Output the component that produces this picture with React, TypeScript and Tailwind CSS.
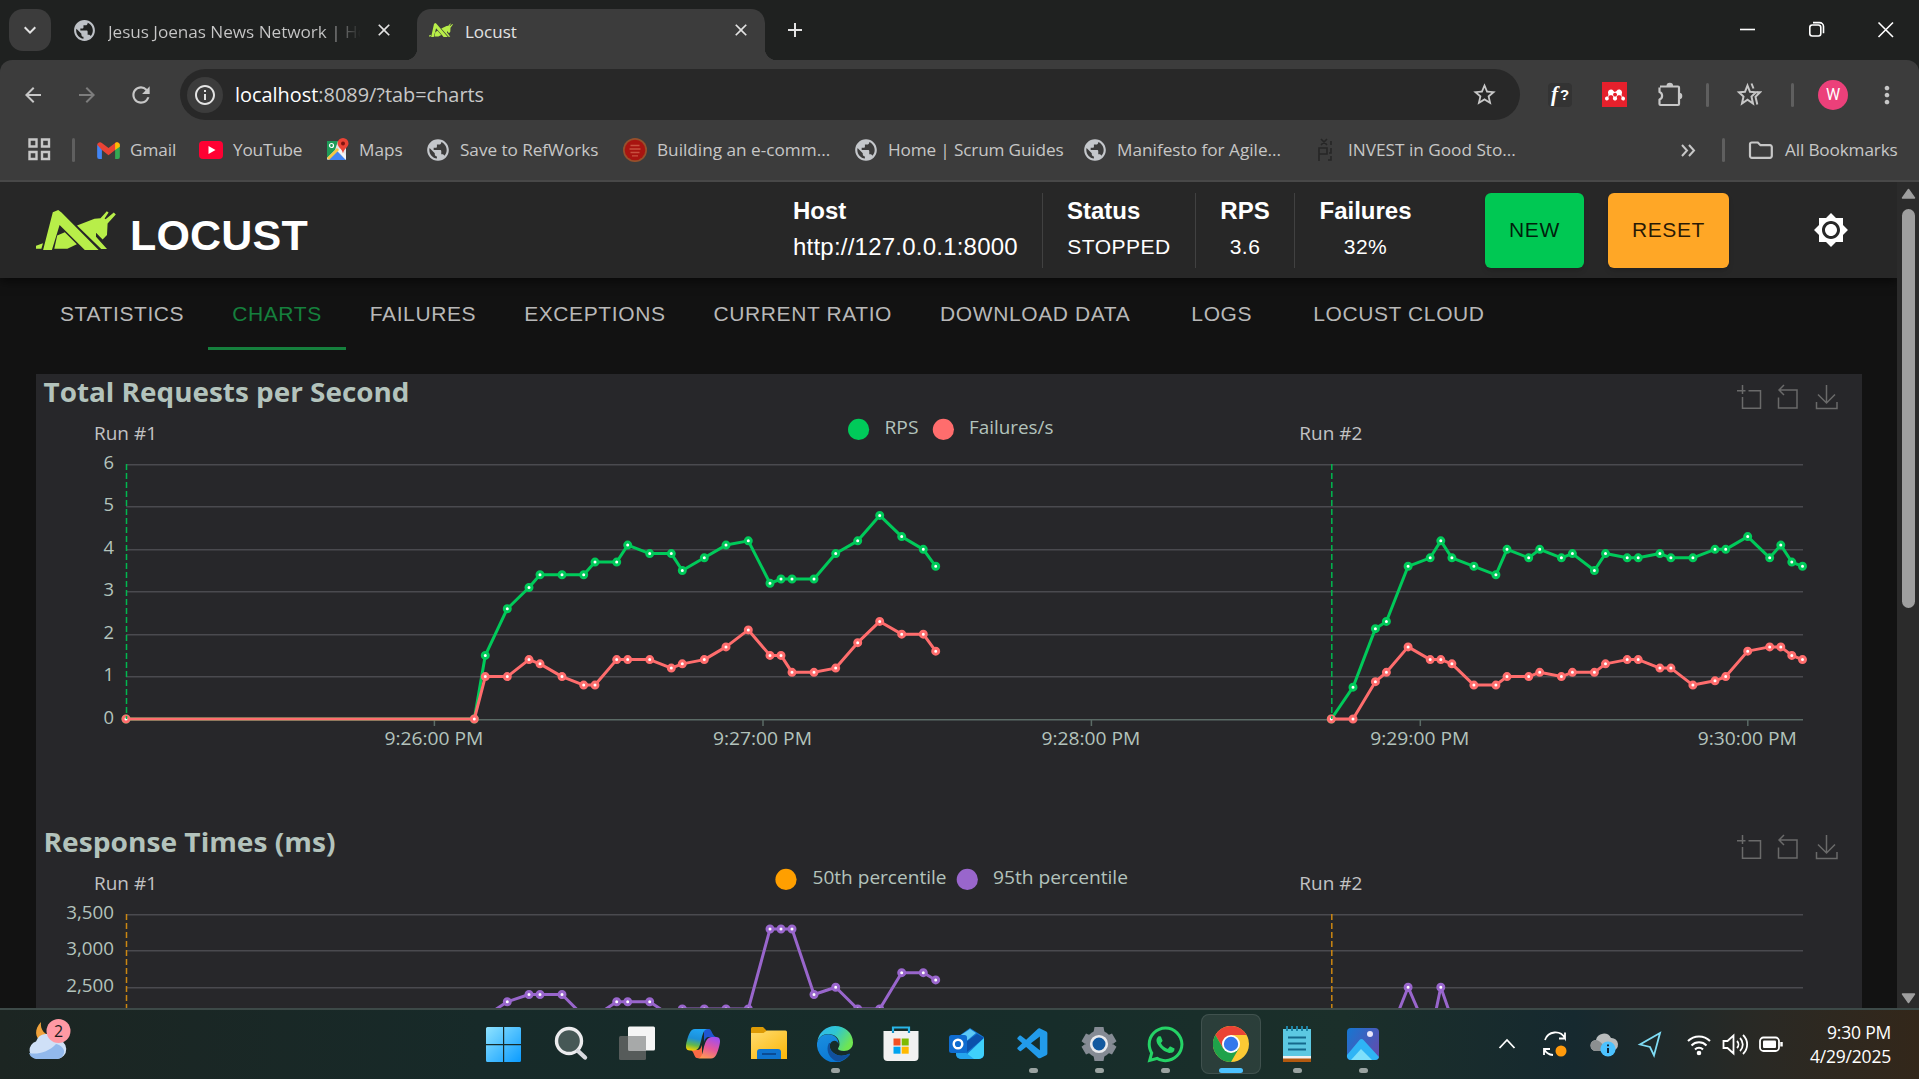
import React from "react";
import {
  MdPublic, MdArrowBack, MdArrowForward, MdRefresh, MdInfoOutline, MdStarBorder, MdClose, MdAdd,
  MdBrightness7, MdMoreVert, MdKeyboardArrowDown,
} from "react-icons/md";
import { FaWhatsapp } from "react-icons/fa";
import { SiMendeley } from "react-icons/si";
import { VscVscode } from "react-icons/vsc";

const UI = "font-['Open_Sans','Noto_Sans',sans-serif]";
const ARIAL = "font-['Liberation_Sans',sans-serif]";

/* ---------- Browser chrome ---------- */

function LocustMark({ className }: { className: string }) {
  return (
    <svg viewBox="0 0 80 40" preserveAspectRatio="none" className={className} fill="#b8ee49">
      <path d="M7.1 40 16.8 2.3 22.2 0 25.5 2.6 62.6 40H48.8L23.6 15 15.9 40Z" />
      <path d="M41 15.4 58.5 8.8 64.5 8.2 70.8 1.2 72.6 2.4 68.6 8.6 69.6 9.2 77.8 2.6 79.8 4.4 71.6 13.4 71 25 66.6 29.4 60 22.8 60 26.8 71 39H65.2Z" />
      <path d="M21.2 25.5 28.8 22.3 40.8 34.3 31.4 38.7H18.3Z" />
      <path d="M0 35.7 7 33.3 5.4 38.7H0Z" />
    </svg>
  );
}

function TabStrip() {
  return (
    <div className="flex h-[60px] items-start bg-[#1f2120] text-[#e3e3e3]">
      <div className="mt-[9px] ml-[9px] flex h-[42px] w-[42px] items-center justify-center rounded-[14px] bg-[#3c3c3c]">
        <MdKeyboardArrowDown className="size-6" />
      </div>
      <div className="mt-[9px] ml-[21px] flex h-[42px] w-[345px] items-center">
        <MdPublic className="size-[25px] text-[#bdc1c6]" />
        <div className="mt-[3px] ml-[11px] h-6 w-[253px] overflow-hidden bg-gradient-to-r from-[#c7c7c7] from-85% to-transparent bg-clip-text text-[17.200px] leading-6 tracking-[-0.050px] whitespace-nowrap text-transparent">
          Jesus Joenas News Network | Home
        </div>
        <MdClose className="ml-[13px] size-[20px]" />
      </div>
      <div className="relative mt-[9px] flex h-[51px] w-[348px] items-start rounded-t-[14px] bg-[#3c3c3c]">
        <div className="absolute bottom-0 -left-3 size-3 bg-[radial-gradient(circle_at_0_0,#1f2120_12px,#3c3c3c_12.5px)]" />
        <div className="absolute -right-3 bottom-0 size-3 bg-[radial-gradient(circle_at_100%_0,#1f2120_12px,#3c3c3c_12.5px)]" />
        <LocustMark className="mt-[14px] ml-3 h-[14px] w-6" />
        <div className="mt-[11px] ml-3 w-[250px] text-[17px] leading-6">Locust</div>
        <MdClose className="mt-[11px] ml-[16px] size-[20px]" />
      </div>
      <MdAdd className="mt-[18px] ml-[18px] size-[24px]" />
      <svg className="mt-[20px] ml-auto h-5 w-[180px]" viewBox="1739 20 180 20" fill="none" stroke="#fff" strokeWidth="1.6">
        <path d="M1740 29.5h15" />
        <rect x="1809.8" y="25" width="11" height="11" rx="2.5" />
        <path d="M1813 22.6h6.5a4 4 0 0 1 4 4v6.6M1878.5 22.5l14.5 14.5M1893 22.5l-14.500 14.500" />
      </svg>
    </div>
  );
}

function Toolbar() {
  return (
    <div className="bg-[#1f2120]">
      <div className="flex h-[69px] items-center rounded-t-xl bg-[#3c3c3c] text-[#c7c7c7]">
        <MdArrowBack className="ml-[21px] size-[24px]" />
        <MdArrowForward className="ml-[30px] size-[24px] text-[#7d7d7d]" />
        <MdRefresh className="ml-[29px] size-[26px]" />
        <div className="ml-[26px] flex h-[51px] w-[1340px] items-center rounded-full bg-[#282828]">
          <div className="ml-[7px] flex size-9 items-center justify-center rounded-full bg-[#3c3c3c]">
            <MdInfoOutline className="size-[24px] text-[#e3e3e3]" />
          </div>
          <div className="ml-[12px] text-[19.900px] leading-7 whitespace-nowrap">
            <span className="text-white">localhost</span>:8089/?tab=charts
          </div>
          <MdStarBorder className="mr-[22px] ml-auto size-[27px]" />
        </div>
        <div className="ml-[28px] flex size-6 items-center justify-center rounded bg-[#333] font-['Liberation_Serif',serif] text-[21px] leading-none font-bold text-white">
          <i>f</i><span className="ml-0.5 text-[15px] font-['Liberation_Sans',sans-serif]">?</span>
        </div>
        <div className="ml-[30px] flex size-[25px] items-center justify-center bg-[#e6202c] text-white">
          <SiMendeley className="size-[20px]" />
        </div>
        <svg className="ml-[29px] h-[28px] w-[28px]" viewBox="0 0 28 28" fill="none" stroke="currentColor" strokeWidth="2.200" strokeLinejoin="round">
          <path d="M4 5.500h18a1 1 0 0 1 1 1V23a1 1 0 0 1-1 1H4.500a1 1 0 0 1-1-1v-4.500a4 4 0 0 0 0-7.500V6.500" />
          <path d="M10.500 5a3.300 3.300 0 0 1 6.600 0zM23 11.700a3.300 3.300 0 0 1 0 6.600z" fill="currentColor" stroke="none" />
        </svg>
        <div className="ml-[22px] h-6 w-[3px] rounded bg-[#5f5f5f]" />
        <svg className="ml-[27px] h-[26px] w-[26px]" viewBox="0 0 26 26" fill="none" stroke="currentColor" strokeWidth="2">
          <path d="M11.500 3.500 14 9.800 20 10.300 15.500 14.500 17 21.500 11.500 17.700 6 21.500 7.500 14.500 3 10.300 9 9.800Z" />
          <path d="M15.500 1.500 17.500 6.500M20.500 10.300H24L19.500 14.800 21.300 22.500" />
        </svg>
        <div className="ml-[29px] h-6 w-[3px] rounded bg-[#5f5f5f]" />
        <div className="ml-[24px] flex size-[30px] items-center justify-center rounded-full bg-[#ec407a] font-['Roboto',sans-serif] text-[16px] text-white">W</div>
        <MdMoreVert className="ml-[25px] size-[28px]" />
      </div>
    </div>
  );
}

function Bookmark({ icon, label, className }: { icon: React.ReactNode; label: string; className: string }) {
  return (
    <div className={"flex h-6 shrink-0 items-center gap-[10px] whitespace-nowrap " + className}>
      <div className="flex w-6 shrink-0 items-center justify-center">{icon}</div>
      <span>{label}</span>
    </div>
  );
}

function BookmarksBar() {
  const globe = <MdPublic className="size-[26px] shrink-0 text-[#c4c7cb]" />;
  return (
    <div className="flex h-[53px] border-b-2 border-[#484848] bg-[#3c3c3c] pt-[9px] text-[17.200px] leading-6 text-[#c7c7c7]">
      <svg className="ml-[28px] size-[23px]" viewBox="0 0 23 23" fill="none" stroke="currentColor" strokeWidth="2.400">
        <path d="M1.500 1.500h7v7h-7zM14 1.500h7v7h-7zM1.500 14h7v7h-7zM14 14h7v7h-7z" />
      </svg>
      <div className="ml-[21px] h-6 w-[3px] rounded bg-[#5f5f5f]" />
      <Bookmark className="ml-[21px] w-[103px] tracking-[-0.100px]" label="Gmail" icon={
        <svg viewBox="0 0 24 18" className="h-[17px] w-[23px]">
          <path fill="#4285f4" d="M0 3v13a2 2 0 0 0 2 2h3V6z" /><path fill="#34a853" d="M24 3v13a2 2 0 0 1-2 2h-3V6z" />
          <path fill="#ea4335" d="M0 3a3 3 0 0 1 5-2l7 5.300L19 1a3 3 0 0 1 5 2L19 8.500l-7 5.500-7-5.500z" /><path fill="#fbbc04" d="M19 1a3 3 0 0 1 5 2v2l-5 3.500z" />
        </svg>} />
      <Bookmark className="w-[126px] tracking-[-0.200px]" label="YouTube" icon={
        <svg viewBox="0 0 24 18" className="h-[18px] w-6"><rect width="24" height="18" rx="4" fill="#ff0033" /><path d="M9.500 5v8l7-4z" fill="#fff" /></svg>} />
      <Bookmark className="w-[101px]" label="Maps" icon={
        <svg viewBox="0 0 24 24" className="size-6">
          <rect x="2" y="3" width="19" height="19" rx="1.500" fill="#dfe3e6" /><path d="M2 3h11l-3 9-8 8z" fill="#1e9b58" />
          <path d="m3 22 9-9 9 9z" fill="#4285f4" /><path d="M13 13l3-3 5 8v4z" fill="#f5f5f5" /><path d="M2 20 12 10l2 2L4 22z" fill="#f6c644" />
          <circle cx="6.500" cy="7.500" r="2" fill="none" stroke="#fff" strokeWidth="1.200" />
          <path d="M18 0a5.500 5.500 0 0 1 5.500 5.500c0 3.500-4.500 5-5.500 10-1-5-5.500-6.500-5.500-10A5.500 5.500 0 0 1 18 0" fill="#ea4335" /><circle cx="18" cy="5.500" r="2" fill="#811411" />
        </svg>} />
      <Bookmark className="w-[197px] tracking-[-0.050px]" label="Save to RefWorks" icon={globe} />
      <Bookmark className="w-[231px]" label="Building an e-comm..." icon={
        <svg viewBox="0 0 24 24" className="size-6 shrink-0"><circle cx="12" cy="12" r="12" fill="#96502c" /><circle cx="12" cy="12" r="10.300" fill="#a81410" /><path d="M7.500 7.500h9M6.500 11h11M7.500 14.500h9M9 17.800h6" stroke="#c8503f" strokeWidth="1.300" /></svg>} />
      <Bookmark className="w-[229px] tracking-[-0.150px]" label="Home | Scrum Guides" icon={globe} />
      <Bookmark className="w-[231px]" label="Manifesto for Agile..." icon={globe} />
      <Bookmark className="w-[210px]" label="INVEST in Good Sto..." icon={
        <svg viewBox="0 0 24 24" className="size-6" fill="none" stroke="#262626" strokeWidth="1.600"><path d="M5 23V10h8v6H5M7 1l6 6M13 1 7 7M17 3v4M17 10v5h-2M17 18v4h-3" /></svg>} />
      <svg className="mt-[5px] ml-[156px] h-[15px] w-4" viewBox="0 0 16 15" fill="none" stroke="currentColor" strokeWidth="2"><path d="m2 2 5 5.500-5 5.500M9 2l5 5.500L9 13" /></svg>
      <div className="ml-[26px] h-6 w-[3px] rounded bg-[#5f5f5f]" />
      <svg className="mt-[3px] ml-[23px] h-[19px] w-[26px]" viewBox="0 0 26 19" fill="none" stroke="currentColor" strokeWidth="2.200"><path d="M2 3.500V15a1.800 1.800 0 0 0 1.800 1.800H22a1.800 1.800 0 0 0 1.800-1.800V6A1.800 1.800 0 0 0 22 4.200H12.500L9.800 1.500H3.800A1.800 1.800 0 0 0 2 3.500Z" /></svg>
      <span className="ml-[11px] tracking-[-0.150px] whitespace-nowrap">All Bookmarks</span>
    </div>
  );
}

/* ---------- Locust page ---------- */

function Stat({ title, value, className = "" }: { title: string; value: string; className?: string }) {
  return (
    <div className={"flex h-[75px] flex-col items-center border-l border-[#414141] px-6 " + className}>
      <div className="text-[24px] leading-[36px] font-bold">{title}</div>
      <div className="text-[21px] leading-[35px] tracking-[0.500px]">{value}</div>
    </div>
  );
}

function AppBar() {
  return (
    <div className={"relative z-10 flex h-24 items-start bg-[#272727] pt-[11px] text-white shadow-[0_3px_10px_rgba(0,0,0,0.6)] " + ARIAL}>
      <LocustMark className="mt-[17px] ml-9 h-10 w-20" />
      <div className="mt-[17px] ml-[14px] w-[659px] text-[43px] leading-[50px] font-bold tracking-[0.200px]">LOCUST</div>
      <div className="ml-[4px] flex h-[70px] w-[249px] flex-col">
        <div className="text-[24px] leading-[36px] font-bold">Host</div>
        <div className="text-[24px] leading-[36px] tracking-[0.225px]">http://127.0.0.1:8000</div>
      </div>
      <Stat title="Status" value="STOPPED" className="w-[153px] [&>div:first-child]:self-start" />
      <Stat title="RPS" value="3.6" className="w-[99px]" />
      <Stat title="Failures" value="32%" className="w-[142px]" />
      <div className="ml-[49px] flex h-[75px] w-[99px] items-center justify-center rounded-md bg-[#00c853] pb-[2px] text-[21px] tracking-[0.600px] text-black/85 shadow-md">NEW</div>
      <div className="ml-6 flex h-[75px] w-[121px] items-center justify-center rounded-md bg-[#ffa726] pb-[2px] text-[21px] tracking-[0.600px] text-black/85 shadow-md">RESET</div>
      <MdBrightness7 className="mt-[19px] ml-[84px] size-9" />
    </div>
  );
}

const TABS = ["STATISTICS", "CHARTS", "FAILURES", "EXCEPTIONS", "CURRENT RATIO", "DOWNLOAD DATA", "LOGS", "LOCUST CLOUD"];

function NavTabs() {
  return (
    <div className={"flex h-[72px] pl-9 text-[21px] leading-[71px] tracking-[0.600px] text-[#b8b8b8] " + ARIAL}>
      {TABS.map((t) => (
        <div
          key={t}
          className={
            t === "CHARTS"
              ? "min-w-[135px] border-b-[3px] border-[#15803d] px-6 text-center whitespace-nowrap text-[#15803d]"
              : "min-w-[135px] px-6 text-center whitespace-nowrap"
          }
        >
          {t}
        </div>
      ))}
    </div>
  );
}

type Pt = [number, number];

const X1 = [126, 474.3, 485.3, 507.3, 529, 540, 562, 583.7, 595, 616.7, 627.7, 649.7, 671.3, 682.3, 704.3, 726, 748.3, 770, 781, 792, 814, 835.7, 857.7, 879.7, 901.7, 923.3, 935.7];
const X2 = [1331.3, 1353, 1375.4, 1386.4, 1408.1, 1430.2, 1440.8, 1451.9, 1473.9, 1495.9, 1507, 1528.7, 1539.7, 1561.4, 1572.4, 1594.4, 1605.5, 1627.2, 1638.2, 1659.9, 1670.9, 1692.9, 1715, 1725.7, 1747.7, 1769.7, 1780.8, 1791.8, 1802.5];
const RPS1 = [0, 0, 1.5, 2.6, 3.1, 3.4, 3.4, 3.4, 3.7, 3.7, 4.1, 3.9, 3.9, 3.5, 3.8, 4.1, 4.2, 3.2, 3.3, 3.3, 3.3, 3.9, 4.2, 4.8, 4.3, 4.0, 3.6];
const RPS2 = [0, 0.75, 2.13, 2.3, 3.6, 3.8, 4.2, 3.8, 3.6, 3.4, 4, 3.8, 4, 3.8, 3.9, 3.5, 3.9, 3.8, 3.8, 3.9, 3.8, 3.8, 4, 4, 4.3, 3.8, 4.1, 3.7, 3.6];
const FAIL1 = [0, 0, 1, 1, 1.4, 1.3, 1, 0.8, 0.8, 1.4, 1.4, 1.4, 1.2, 1.3, 1.4, 1.7, 2.1, 1.5, 1.5, 1.1, 1.1, 1.2, 1.8, 2.3, 2, 2, 1.6];
const FAIL2 = [0, 0, 0.88, 1.1, 1.7, 1.4, 1.4, 1.3, 0.8, 0.8, 1, 1, 1.1, 1, 1.1, 1.1, 1.3, 1.4, 1.4, 1.2, 1.2, 0.8, 0.9, 1, 1.6, 1.7, 1.7, 1.5, 1.4];
const P95A = [0, 0, 2100, 2300, 2400, 2400, 2400, 2100, 2100, 2300, 2300, 2300, 2100, 2200, 2200, 2200, 2200, 3300, 3300, 3300, 2400, 2500, 2200, 2200, 2700, 2700, 2600];
const P95B = [0, 600, 1200, 1750, 2500, 1800, 2500, 2060, 1900, 1800, 1700];

const TOP = 464.5;
const BOTTOM = 719;

function points(xs: number[], values: number[], max: number): Pt[] {
  return values.map((v, i) => [xs[i], BOTTOM - (v / max) * (BOTTOM - TOP)]);
}

function Series({ pts, color }: { pts: Pt[]; color: string }) {
  return (
    <g>
      <polyline points={pts.map((p) => p.join(",")).join(" ")} fill="none" stroke={color} strokeWidth="3" strokeLinejoin="bevel" />
      {pts.map(([x, y]) => (
        <circle key={x} cx={x} cy={y} r="3" fill="#fff" stroke={color} strokeWidth="3" />
      ))}
    </g>
  );
}

interface ChartProps {
  title: string;
  titleWidth: number;
  max: number;
  labels: string[];
  times: string[];
  mark: string;
  legend: { x: number; tx: number; w: number; color: string; name: string }[];
  series: { color: string; pts: Pt[] }[];
}

function Chart({ title, titleWidth, max, labels, times, mark, legend, series }: ChartProps) {
  const step = (BOTTOM - TOP) / (labels.length - 1);
  return (
    <svg className={"block h-[450px] w-[1826px] shrink-0 bg-[#27272a] " + UI} viewBox="36 374 1826 450" fontSize="18.700">
      <text x="43.500" y="401.500" fontSize="27.500" fontWeight="bold" fill="#b3c3bc" textLength={titleWidth} lengthAdjust="spacingAndGlyphs">{title}</text>
      <g fill="none" stroke="#6a6a6a" strokeWidth="1.500">
        <path d="M1737 390.700h8.500M1742.500 385v9M1748.500 390.700h12v17.500h-18V397" />
        <path d="M1779.500 390h17.500v18h-18.500V397.500M1784 385l-5 5 5 5" />
        <path d="M1826.500 385v17M1818 394.500l8.500 8.500 8.500-8.500M1816.500 402v6.500h20.500V402" />
      </g>
      {legend.map((l) => (
        <g key={l.name}>
          <circle cx={l.x} cy="429.400" r="10.600" fill={l.color} />
          <text x={l.tx} y="434" fill="#b3c3bc" textLength={l.w} lengthAdjust="spacingAndGlyphs">{l.name}</text>
        </g>
      ))}
      {labels.map((l, i) => {
        const y = BOTTOM - i * step;
        return (
          <g key={i}>
            <path d={`M126 ${Math.floor(y) + 0.75}H1803`} stroke={i === 0 ? "#5b6b66" : "#4a4a4f"} strokeWidth="1.500" />
            {l && <text x="114" y={y + 4.5} textAnchor="end" fill="#b3c3bc" fontSize={max > 100 ? 18.8 : 18.4}>{l}</text>}
          </g>
        );
      })}
      {times.map((t, i) => {
        const x = [434.4, 763, 1091.4, 1420.3, 1747.8][i];
        return (
          <g key={t}>
            <path d={`M${x} 720v6`} stroke="#5b6b66" strokeWidth="1.500" />
            <text x={x - 50} y="744.500" fill="#b3c3bc" textLength="99" lengthAdjust="spacingAndGlyphs">{t}</text>
          </g>
        );
      })}
      {series.map((s, i) => (
        <Series key={i} pts={s.pts} color={s.color} />
      ))}
      {[126.5, 1331.8].map((x, i) => (
        <g key={x}>
          <path d={`M${x} 464V719`} stroke={mark} strokeWidth="1.500" strokeDasharray="6 3" />
          <text x={x - 32.5} y="440" fill="#c2c2c4" textLength="63" lengthAdjust="spacingAndGlyphs">{`Run #${i + 1}`}</text>
        </g>
      ))}
    </svg>
  );
}

function Charts() {
  return (
    <div className="ml-9 flex h-[634px] w-[1826px] flex-col overflow-hidden">
      <Chart
        title="Total Requests per Second" titleWidth={366} max={6}
        labels={["0", "1", "2", "3", "4", "5", "6"]} mark="#00b84f"
        times={["9:26:00 PM", "9:27:00 PM", "9:28:00 PM", "9:29:00 PM", "9:30:00 PM"]}
        legend={[
          { x: 858.6, tx: 884.5, w: 34, color: "#00ca5a", name: "RPS" },
          { x: 943.4, tx: 969, w: 84.5, color: "#ff6d6d", name: "Failures/s" },
        ]}
        series={[
          { color: "#00ca5a", pts: points(X1, RPS1, 6) },
          { color: "#00ca5a", pts: points(X2, RPS2, 6) },
          { color: "#ff6d6d", pts: points(X1, FAIL1, 6) },
          { color: "#ff6d6d", pts: points(X2, FAIL2, 6) },
        ]}
      />
      <Chart
        title="Response Times (ms)" titleWidth={292} max={3500}
        labels={["", "", "", "", "", "2,500", "3,000", "3,500"]} mark="#cc8712" times={[]}
        legend={[
          { x: 786, tx: 812.5, w: 134, color: "#ff9f00", name: "50th percentile" },
          { x: 967.3, tx: 993, w: 135, color: "#9966cc", name: "95th percentile" },
        ]}
        series={[
          { color: "#9966cc", pts: points(X1, P95A, 3500) },
          { color: "#9966cc", pts: points(X2, P95B, 3500) },
        ]}
      />
    </div>
  );
}

function Scrollbar() {
  return (
    <div className="flex w-[22px] flex-col items-center bg-[#2b2b2b] pt-[6px] pb-[4px]">
      <svg viewBox="0 0 15 11" className="h-[11px] w-[15px]"><path d="M7.500 1.500 13.500 10h-12z" fill="#9f9f9f" stroke="#9f9f9f" strokeWidth="1.500" strokeLinejoin="round" /></svg>
      <div className="mt-[10px] h-[399px] w-[13px] rounded-full bg-[#9f9f9f]" />
      <svg viewBox="0 0 15 11" className="mt-auto h-[11px] w-[15px]"><path d="M7.500 9.500 13.500 1h-12z" fill="#9f9f9f" stroke="#9f9f9f" strokeWidth="1.500" strokeLinejoin="round" /></svg>
    </div>
  );
}

/* ---------- Taskbar ---------- */

function TaskIcon({ children, state = "" }: { children: React.ReactNode; state?: string }) {
  return (
    <div className="flex w-[66px] justify-center pt-[4px]">
      <div className={"flex h-[60px] w-[60px] flex-col items-center rounded-lg pt-[12px] " + (state === "active" ? "bg-white/8 ring-1 ring-white/10 ring-inset" : "")}>
        <div className="flex h-9 w-9 items-center justify-center">{children}</div>
        {state === "open" && <div className="mt-[6px] h-[5px] w-[9px] rounded-full bg-[#9aa3a1]" />}
        {state === "active" && <div className="mt-[6px] h-[5px] w-6 rounded-full bg-[#4cc2ff]" />}
      </div>
    </div>
  );
}

function Taskbar() {
  return (
    <div className={"flex h-[71px] border-t-2 border-[#3d4a48] bg-[linear-gradient(90deg,#1c2522_0%,#172a29_25%,#172d2a_55%,#1b2f2a_70%,#16292f_82%,#2a2924_92%,#33271a_100%)] " + UI}>
      <svg viewBox="0 0 48 48" className="mt-[6px] ml-6 size-12">
        <path d="M17 6c-1 7 3 14 14 14-3 6-10 7-14 5-6-3-7-12 0-19" fill="#f0a23c" />
        <path d="M13 43a9 9 0 0 1-1-17.500 11 11 0 0 1 20-2 9.500 9.500 0 0 1 1 19.500z" fill="#cfe0f7" /><path d="M13 43a9 9 0 0 1-8-6c8 2 20-1 27-9 5 1 9 5 8 9a8 8 0 0 1-7 6z" fill="#92b9ec" />
        <circle cx="34.500" cy="15" r="12" fill="#ff99a4" /><text x="34.500" y="20.500" textAnchor="middle" fontSize="16" fill="#1b1b1b">2</text>
      </svg>
      <div className="ml-[398px] flex">
        <TaskIcon><svg viewBox="0 0 35 35" className="size-[35px]"><defs><linearGradient id="win" x2="1" y2="1"><stop stopColor="#8fe3ff" /><stop offset="1" stopColor="#0a9bff" /></linearGradient></defs><path d="M1.500 0H17v17H0V1.500A1.500 1.500 0 0 1 1.500 0M18.200 0h15.300A1.500 1.500 0 0 1 35 1.500V17H18.200zM0 18.200h17V35H1.500A1.500 1.500 0 0 1 0 33.500zM18.200 18.200H35v15.300a1.500 1.500 0 0 1-1.500 1.500H18.200z" fill="url(#win)" /></svg></TaskIcon>
        <div className="w-[2px]" />
        <TaskIcon><svg viewBox="0 0 36 36" className="size-9"><circle cx="16" cy="15" r="12.500" fill="#465856" stroke="#ececee" strokeWidth="3.400" /><path d="m25 25 7 6.500" stroke="#d8dadf" strokeWidth="4.400" strokeLinecap="round" /></svg></TaskIcon>
        <TaskIcon><svg viewBox="0 0 36 36" className="size-9"><rect x="9" y="0.500" width="27" height="24" rx="1.500" fill="#f5f5f5" /><rect x="0" y="10" width="27" height="24" rx="1.500" fill="#565b5a" /><path d="M9 10h18v15H10.500A1.500 1.500 0 0 1 9 23.500z" fill="#a7a9a9" /></svg></TaskIcon>
        <TaskIcon><svg viewBox="0 0 36 36" className="size-9">
          <defs>
            <linearGradient id="cpa" x1="0.500" x2="0.300" y2="1"><stop stopColor="#1fa4f4" /><stop offset="0.450" stopColor="#1c90d8" /><stop offset="0.750" stopColor="#62b84c" /><stop offset="1" stopColor="#f5d000" /></linearGradient>
            <linearGradient id="cpb" x1="0.700" x2="0.300" y2="1"><stop stopColor="#a04ef0" /><stop offset="0.500" stopColor="#e5579c" /><stop offset="1" stopColor="#ff9a52" /></linearGradient>
          </defs>
          <path d="M19 3h5c3 0 3 8 8 8h-8c-3 0-4 2-5 5z" fill="#1f55d0" /><path d="M17 32h-5c-3 0-3-8-7-8h7c3 0 4-2 5-5z" fill="#fb6a45" />
          <path d="M10 3h13c-4 0-5 4-6.500 10S14 24.500 9 24.500H5c-5 0-4.500-5-3-10S5 3 10 3" fill="url(#cpa)" />
          <path d="M26 32.500H12c4 0 5-3 6.500-9.500S22 11 27 11h4c5 0 4.500 5 3 10s-3 11.500-8 11.500" fill="url(#cpb)" />
        </svg></TaskIcon>
        <TaskIcon><svg viewBox="0 0 36 36" className="size-9"><defs><linearGradient id="fold" x2="0.800" y2="1"><stop stopColor="#ffdc70" /><stop offset="1" stopColor="#fbb90f" /></linearGradient></defs><path d="M0 2.500A1.500 1.500 0 0 1 1.500 1H12l4 4v4H0z" fill="#dd9a05" /><path d="M0 7h12.500L16 4.500h18.500A1.500 1.500 0 0 1 36 6v27H0z" fill="url(#fold)" /><path d="M6 33v-7a3 3 0 0 1 3-3h18a3 3 0 0 1 3 3v7z" fill="#0f74cf" /><path d="M11 28h14" stroke="#0a4b94" strokeWidth="2" /></svg></TaskIcon>
        <TaskIcon state="open"><svg viewBox="0 0 36 36" className="size-9">
          <defs>
            <linearGradient id="eg" x2="1" y2="0.500"><stop stopColor="#33b8f1" /><stop offset="0.500" stopColor="#2fc6d2" /><stop offset="1" stopColor="#6fe552" /></linearGradient>
            <linearGradient id="eb" x2="0.400" y2="1"><stop stopColor="#1b8fe0" /><stop offset="1" stopColor="#0a78d4" /></linearGradient>
          </defs>
          <path d="M0 17C2 10 8 7.500 13 8.500c6 1 8.500 5 8.500 9.500-1-3-4-4-6.500-2.500-3 2-3 6.500-.5 9.500 4 5 11 6 17 3 1-.500 1.700 0 1 1A18 18 0 0 1 0 17" fill="url(#eb)" />
          <path d="M12 17c-2.500 4-2 11 3 15.500 2 2 5 3.200 7 3 4-1 8-3.500 10.500-6.500.700-1 0-1.500-1-1-6 3-13 2-17-3-2-2.600-2.200-5.500-1-8" fill="#11509c" />
          <path d="M.3 15.500A18 18 0 0 1 18 0c10 0 18 7 18 16.500 0 5.500-4 8.500-9 8.500-4 0-6-1-6-2.200s1.500-2 1.500-4.800c0-6-5-10-11.500-10C6 8 2 11 .3 15.500" fill="url(#eg)" />
        </svg></TaskIcon>
        <TaskIcon><svg viewBox="0 0 36 36" className="size-9"><path d="M10 8V1.500h16V8" fill="none" stroke="#29b5e8" strokeWidth="2.200" /><path d="M.5 5h35v26a4 4 0 0 1-4 4h-27a4 4 0 0 1-4-4z" fill="#f1f1f1" /><path d="M10.500 12.500h7v7h-7z" fill="#f25022" /><path d="M18.700 12.500h7v7h-7z" fill="#7fba00" /><path d="M10.500 20.700h7v7h-7z" fill="#00a4ef" /><path d="M18.700 20.700h7v7h-7z" fill="#ffb900" /><path d="M10 5v2M26 5v2" stroke="#1793c8" strokeWidth="2.200" /></svg></TaskIcon>
        <TaskIcon><svg viewBox="0 0 36 36" className="size-9"><path d="M7 12 21 2l14 9v17a5 5 0 0 1-5 5H12a5 5 0 0 1-5-5z" fill="#1174cf" /><path d="M12 9 21 3l6 4-13 11z" fill="#5cc9f5" /><path d="M14 18 28 8l7 4-17 14z" fill="#0b51ab" /><path d="m35 12-22 21h17a5 5 0 0 0 5-5z" fill="#3fd0fa" /><path d="M7 19 25 33H12a5 5 0 0 1-5-5z" fill="#24a5ee" /><rect x="0" y="9" width="18" height="18" rx="2.500" fill="#0f6cd0" /><circle cx="9" cy="18" r="4.300" fill="none" stroke="#fff" strokeWidth="2.400" /></svg></TaskIcon>
        <TaskIcon state="open"><VscVscode className="size-[37px] shrink-0 text-[#229bea]" /></TaskIcon>
        <TaskIcon state="open"><svg viewBox="0 0 36 36" className="size-9"><g fill="#858b94"><circle cx="18" cy="18" r="13.500" /><path d="M13.500 1h9l1.500 8h-12zM13.500 35h9l1.500-8h-12zM31 7.500l4.500 7.800-6.500 5-5.500-9.500zM5 28.500.5 20.700l6.500-5 5.500 9.500zM5 7.500.5 15.300l6.500 5 5.500-9.500zM31 28.500l4.500-7.800-6.500-5-5.500 9.500z" /></g><circle cx="18" cy="18" r="7.800" fill="#12599f" stroke="#e8eaed" strokeWidth="2.600" /></svg></TaskIcon>
        <TaskIcon state="open"><FaWhatsapp className="size-[41px] shrink-0 text-[#25d366]" /></TaskIcon>
        <TaskIcon state="active"><svg viewBox="0 0 36 36" className="size-9"><circle cx="18" cy="18" r="18" fill="#fcc934" /><path d="M2.400 9A18 18 0 0 1 33.600 9H18l-7.800 13.500z" fill="#ea4335" /><path d="M2.400 9A18 18 0 0 0 18 36l7.800-13.500-15.600 0z" fill="#1fa24a" /><circle cx="18" cy="18" r="9" fill="#fff" /><circle cx="18" cy="18" r="7.200" fill="#3478ec" /></svg></TaskIcon>
        <TaskIcon state="open"><svg viewBox="0 0 36 36" className="size-9"><path d="M4 3h28v28H4z" fill="#5cc8e2" /><path d="M4 30h28v3H4z" fill="#f2f2f2" /><path d="M4 32.500h28V36H4z" fill="#b3590f" /><path d="M9 11.500h18M9 17.500h18M9 23.500h18" stroke="#14688c" strokeWidth="2" /><path d="M8 0v5M13 0v5M18 0v5M23 0v5M28 0v5" stroke="#1e84a6" strokeWidth="2" /></svg></TaskIcon>
        <TaskIcon state="open"><svg viewBox="0 0 36 36" className="size-9"><defs><linearGradient id="ph" x2="1" y2="0.600"><stop stopColor="#1577d2" /><stop offset="1" stopColor="#5b4fb0" /></linearGradient></defs><rect x="2" y="2" width="32" height="32" rx="4" fill="url(#ph)" /><path d="M2 29 14.500 14a2.500 2.500 0 0 1 4 0L34 31a4 4 0 0 1-4 3H6a4 4 0 0 1-4-5" fill="#2fb4f5" /><path d="m6 34 10-11 11 11z" fill="#7fe0fb" /><circle cx="25" cy="8" r="3" fill="#e8e6fa" /></svg></TaskIcon>
      </div>
      <svg viewBox="1490 1010 320 69" className="ml-[94px] h-[69px] w-[320px] shrink-0" fill="none" stroke="#fff" strokeWidth="1.800">
        <path d="m1499.500 1048 7.500-8 7.500 8" />
        <path d="M1545 1040a11 11 0 0 1 20-2v-5.500M1565 1038.500h-6M1544 1055v-6h6M1544 1049a11 11 0 0 0 9 6" />
        <circle cx="1561" cy="1051" r="5.500" fill="#ff9a0c" stroke="none" />
        <g stroke="none"><path d="M1596 1051a5.500 5.500 0 0 1 0-11 8 8 0 0 1 15-2 6.500 6.500 0 0 1 1 13z" fill="#b9bcbd" /><path d="M1596 1051a5.500 5.500 0 0 1 0-11c4 0 7 5 12 11z" fill="#8b8f90" /><circle cx="1608" cy="1049" r="7.600" fill="#4cc2ff" /></g>
        <path d="M1608 1048v5M1608 1044.500v1.800" stroke="#123" strokeWidth="2" />
        <path d="m1660 1033-20 11.500 10 2.500 4 8.500z" stroke="#7fdcf5" />
        <g strokeWidth="2"><path d="M1688 1041a15.500 15.500 0 0 1 22 0M1691.500 1045.500a10.500 10.500 0 0 1 15 0M1695 1049.500a5.500 5.500 0 0 1 8 0" /><circle cx="1699" cy="1053" r="1.300" fill="#fff" /></g>
        <path d="M1723.500 1041h4l6-5.500v18l-6-5.500h-4zM1737 1041a5 5 0 0 1 0 7M1740 1038a9 9 0 0 1 0 13M1743 1035a13 13 0 0 1 0 19" />
        <rect x="1760" y="1037.500" width="19" height="13.500" rx="3.500" /><rect x="1763" y="1040.500" width="13" height="7.500" rx="1" fill="#fff" stroke="none" /><path d="M1781.500 1042v4.500" strokeWidth="2.500" />
      </svg>
      <div className="mt-[10px] -ml-[19px] w-[100px] text-right text-[17.500px] leading-6 tracking-[-0.200px] whitespace-nowrap text-white">
        <div>9:30 PM</div>
        <div>4/29/2025</div>
      </div>
    </div>
  );
}

export default function App() {
  return (
    <div className={"flex h-[1079px] w-[1919px] flex-col overflow-hidden bg-[#121212] " + UI}>
      <TabStrip />
      <Toolbar />
      <BookmarksBar />
      <div className="flex h-[826px] shrink-0">
        <div className="flex w-[1897px] flex-col overflow-hidden">
          <AppBar />
          <NavTabs />
          <div className="h-6 shrink-0" />
          <Charts />
        </div>
        <Scrollbar />
      </div>
      <Taskbar />
    </div>
  );
}
